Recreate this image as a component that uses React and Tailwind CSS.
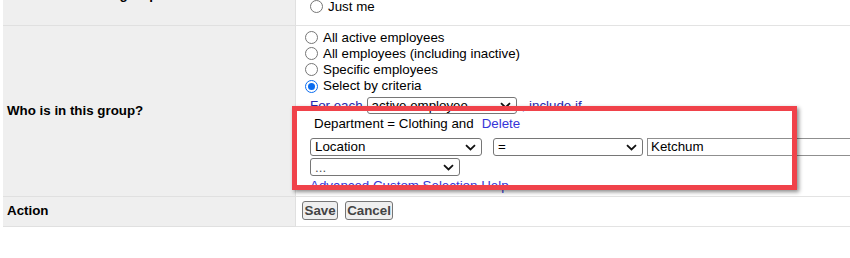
import React from "react";

function Chevron() {
  return (
    <svg width="11" height="7" viewBox="0 0 11 7" className="shrink-0">
      <path d="M1 1.2 L5.5 5.5 L10 1.2" fill="none" stroke="#111" strokeWidth="1.8" />
    </svg>
  );
}

function Select({ className, text, textClass }) {
  return (
    <div
      className={`flex items-center justify-between border border-[#767676] rounded-[3px] bg-white pl-[4px] pr-[5px] ${className}`}
    >
      <span className={`leading-none whitespace-nowrap ${textClass || "text-black"}`}>{text}</span>
      <Chevron />
    </div>
  );
}

function Radio({ checked }) {
  if (checked) {
    return (
      <span className="w-[13px] h-[13px] rounded-full border-[1.5px] border-[#0a6cf0] bg-white flex items-center justify-center shrink-0">
        <span className="w-[7px] h-[7px] rounded-full bg-[#0a6cf0]" />
      </span>
    );
  }
  return <span className="w-[13px] h-[13px] rounded-full border border-[#767676] bg-white shrink-0" />;
}

function RadioRow({ checked, label }) {
  return (
    <div className="flex items-center h-[16.33px] gap-[5px]">
      <Radio checked={checked} />
      <span className="leading-none whitespace-nowrap">{label}</span>
    </div>
  );
}

export default function App() {
  return (
    <div className="relative w-[850px] h-[258px] overflow-hidden bg-white text-black font-['Liberation_Sans',Arial,sans-serif] text-[13.33px]">
      <div className="-mt-[35px] pl-[3px]">
        <div className="grid grid-cols-[293px_1fr]">
          {/* Row 1 */}
          <div className="h-[61px] bg-[#efefef] border-b border-r border-[#e0e0e0] flex items-center pl-[4px] font-bold whitespace-nowrap">
            Who can see this group?
          </div>
          <div className="h-[61px] border-b border-[#e3e3e3] flex flex-col justify-end pb-[10px] pl-[14px]">
            <RadioRow label="Just me" />
          </div>

          {/* Row 2 */}
          <div className="h-[171px] bg-[#efefef] border-b border-r border-[#e0e0e0] flex items-center pl-[4px] font-bold whitespace-nowrap">
            Who is in this group?
          </div>
          <div className="h-[171px] border-b border-[#e3e3e3] flex flex-col pt-[3px]">
            <div className="pl-[9px] flex flex-col">
              <RadioRow label="All active employees" />
              <RadioRow label="All employees (including inactive)" />
              <RadioRow label="Specific employees" />
              <RadioRow checked label="Select by criteria" />
            </div>
            <div className="mt-[2.5px] h-[18px] flex items-center pl-[14px] text-[#2828b0] whitespace-nowrap">
              <span>For each</span>
              <Select className="ml-[4px] w-[150px] h-[17px]" text="active employee" />
              <span className="ml-[5px]">, include if</span>
            </div>
            <div className="h-[18px] flex items-center pl-[18px] whitespace-nowrap">
              <span>Department = Clothing and</span>
              <span className="ml-[8px] text-[#3535d8]">Delete</span>
            </div>
            <div className="mt-[5px] h-[19px] flex items-stretch pl-[14px]">
              <Select className="w-[172px]" text="Location" />
              <Select className="ml-[11px] w-[150px]" text="=" />
              <div className="ml-[4px] w-[240px] border border-[#8f8f8f] bg-white flex items-center pl-[3px] leading-none">
                Ketchum
              </div>
            </div>
            <div className="mt-[2px] h-[18px] flex pl-[14px]">
              <Select className="w-[150px]" text="..." textClass="text-[#555]" />
            </div>
            <div className="pl-[14px] text-[#3535d8] whitespace-nowrap">Advanced Custom Selection Help</div>
          </div>

          {/* Row 3 */}
          <div className="h-[30px] bg-[#efefef] border-b border-r border-[#e0e0e0] flex items-center pl-[4px] pb-[1px] font-bold">
            Action
          </div>
          <div className="h-[30px] border-b border-[#e3e3e3] flex items-start pt-[4px] pl-[6px] gap-[7px]">
            <button className="h-[19px] px-[1.5px] bg-[#efefef] border border-[#767676] rounded-[3px] font-bold text-[#444] leading-none">
              Save
            </button>
            <button className="h-[19px] px-[1px] bg-[#efefef] border border-[#767676] rounded-[3px] font-bold text-[#444] leading-none">
              Cancel
            </button>
          </div>
        </div>
      </div>

      {/* Annotation highlight */}
      <div className="absolute left-[292px] top-[106px] w-[505px] h-[84px] border-[5px] border-[#f0424a] shadow-[2px_2px_4px_rgba(0,0,0,0.45)] pointer-events-none" />
    </div>
  );
}
